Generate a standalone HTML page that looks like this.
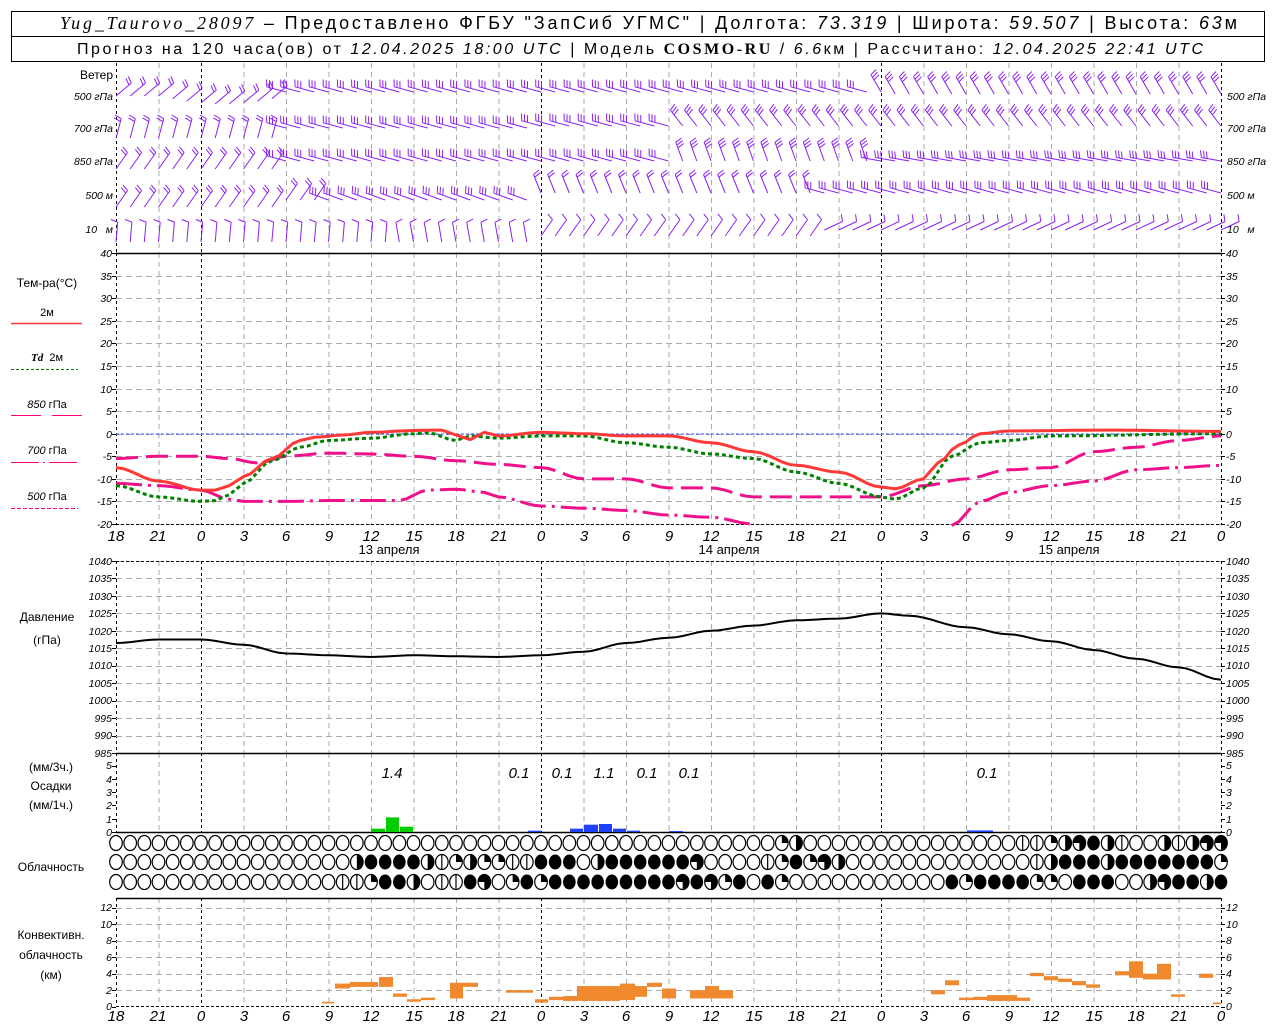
<!DOCTYPE html>
<html><head><meta charset="utf-8">
<style>
html,body{margin:0;padding:0;background:#fff;width:1280px;height:1024px;overflow:hidden}
svg{display:block;font-family:"Liberation Sans",sans-serif}
.ax{font-size:10.5px;font-style:italic}
.lb{font-size:12px}
.xl{font-size:15px;font-style:italic}
</style></head><body>
<svg id="s" width="1280" height="1024" viewBox="0 0 1280 1024" xmlns="http://www.w3.org/2000/svg">
<rect x="11.5" y="11.5" width="1253" height="50" fill="none" stroke="#000"/>
<line x1="11" y1="36.5" x2="1264" y2="36.5" stroke="#000"/>
<text x="60" y="29" font-size="18" textLength="1177" lengthAdjust="spacing"><tspan font-style="italic" font-family="Liberation Serif">Yug_Taurovo_28097</tspan> – Предоставлено ФГБУ "ЗапСиб УГМС" | Долгота: <tspan font-style="italic">73.319</tspan> | Широта: <tspan font-style="italic">59.507</tspan> | Высота: <tspan font-style="italic">63</tspan>м</text>
<text x="77" y="54" font-size="16" textLength="1126" lengthAdjust="spacing">Прогноз на 120 часа(ов) от <tspan font-style="italic">12.04.2025 18:00 UTC</tspan> | Модель <tspan font-weight="bold" font-family="Liberation Serif">COSMO-RU</tspan> / <tspan font-style="italic">6.6</tspan>км | Рассчитано: <tspan font-style="italic">12.04.2025 22:41 UTC</tspan></text>

<g id="grid"></g>
<g id="data"></g>

<g class="lb" text-anchor="end">
<text x="113" y="79">Ветер</text>
</g>
<g class="ax" text-anchor="end" font-size="11">
<text x="113" y="100">500 гПа</text><text x="113" y="132">700 гПа</text><text x="113" y="165">850 гПа</text><text x="113" y="199">500 м</text><text x="113" y="233">10 &#160; м</text>
</g>
<g class="ax" font-size="11">
<text x="1227" y="100">500 гПа</text><text x="1227" y="132">700 гПа</text><text x="1227" y="165">850 гПа</text><text x="1227" y="199">500 м</text><text x="1227" y="233">10 &#160; м</text>
</g>
<g class="lb" text-anchor="middle">
<text x="47" y="287">Тем-ра(°С)</text>
<text x="47" y="316" font-size="11">2м</text>
<text x="47" y="361" font-size="11"><tspan font-style="italic" font-weight="bold" font-family="Liberation Serif">Td</tspan> &#160;2м</text>
<text x="47" y="408" font-size="11"><tspan font-style="italic">850</tspan> гПа</text>
<text x="47" y="454" font-size="11"><tspan font-style="italic">700</tspan> гПа</text>
<text x="47" y="500" font-size="11"><tspan font-style="italic">500</tspan> гПа</text>
<text x="47" y="621">Давление</text>
<text x="47" y="644">(гПа)</text>
<text x="51" y="771">(мм/3ч.)</text>
<text x="51" y="790">Осадки</text>
<text x="51" y="809">(мм/1ч.)</text>
<text x="51" y="871">Облачность</text>
<text x="51" y="939">Конвективн.</text>
<text x="51" y="959">облачность</text>
<text x="51" y="979">(км)</text>
</g>
<line x1="11" y1="323.5" x2="82" y2="323.5" stroke="#ff3838" stroke-width="1.5"/>
<line x1="11" y1="369.5" x2="78" y2="369.5" stroke="#008000" stroke-dasharray="3 2"/>
<line x1="11" y1="415.5" x2="82" y2="415.5" stroke="#ff0080" stroke-dasharray="30 11"/>
<line x1="11" y1="462.5" x2="78" y2="462.5" stroke="#ff0080" stroke-dasharray="28 4 2 4"/>
<line x1="11" y1="508.5" x2="78" y2="508.5" stroke="#ff0080" stroke-dasharray="4 2"/>

<g class="ax" text-anchor="end">
<text x="112" y="257">40</text><text x="112" y="280">35</text><text x="112" y="302">30</text><text x="112" y="325">25</text><text x="112" y="347">20</text><text x="112" y="370">15</text><text x="112" y="393">10</text><text x="112" y="415">5</text><text x="112" y="438">0</text><text x="112" y="460">-5</text><text x="112" y="483">-10</text><text x="112" y="505">-15</text><text x="112" y="528">-20</text>
</g>
<g class="ax">
<text x="1226" y="257">40</text><text x="1226" y="280">35</text><text x="1226" y="302">30</text><text x="1226" y="325">25</text><text x="1226" y="347">20</text><text x="1226" y="370">15</text><text x="1226" y="393">10</text><text x="1226" y="415">5</text><text x="1226" y="438">0</text><text x="1226" y="460">-5</text><text x="1226" y="483">-10</text><text x="1226" y="505">-15</text><text x="1226" y="528">-20</text>
</g>
<g class="xl" text-anchor="middle">
<text y="541"><tspan x="116">18</tspan><tspan x="158">21</tspan><tspan x="201">0</tspan><tspan x="244">3</tspan><tspan x="286">6</tspan><tspan x="329">9</tspan><tspan x="371">12</tspan><tspan x="414">15</tspan><tspan x="456">18</tspan><tspan x="499">21</tspan><tspan x="541">0</tspan><tspan x="584">3</tspan><tspan x="626">6</tspan><tspan x="669">9</tspan><tspan x="711">12</tspan><tspan x="754">15</tspan><tspan x="796">18</tspan><tspan x="839">21</tspan><tspan x="881">0</tspan><tspan x="924">3</tspan><tspan x="966">6</tspan><tspan x="1009">9</tspan><tspan x="1051">12</tspan><tspan x="1094">15</tspan><tspan x="1136">18</tspan><tspan x="1179">21</tspan><tspan x="1221">0</tspan></text>
<text y="1021"><tspan x="116">18</tspan><tspan x="158">21</tspan><tspan x="201">0</tspan><tspan x="244">3</tspan><tspan x="286">6</tspan><tspan x="329">9</tspan><tspan x="371">12</tspan><tspan x="414">15</tspan><tspan x="456">18</tspan><tspan x="499">21</tspan><tspan x="541">0</tspan><tspan x="584">3</tspan><tspan x="626">6</tspan><tspan x="669">9</tspan><tspan x="711">12</tspan><tspan x="754">15</tspan><tspan x="796">18</tspan><tspan x="839">21</tspan><tspan x="881">0</tspan><tspan x="924">3</tspan><tspan x="966">6</tspan><tspan x="1009">9</tspan><tspan x="1051">12</tspan><tspan x="1094">15</tspan><tspan x="1136">18</tspan><tspan x="1179">21</tspan><tspan x="1221">0</tspan></text>
</g>
<g font-size="13" text-anchor="middle">
<text x="389" y="554">13 апреля</text><text x="729" y="554">14 апреля</text><text x="1069" y="554">15 апреля</text>
</g>
<g class="ax" text-anchor="end" font-size="9">
<text x="112" y="565">1040</text><text x="112" y="582">1035</text><text x="112" y="600">1030</text><text x="112" y="617">1025</text><text x="112" y="635">1020</text><text x="112" y="652">1015</text><text x="112" y="669">1010</text><text x="112" y="687">1005</text><text x="112" y="704">1000</text><text x="112" y="722">995</text><text x="112" y="739">990</text><text x="112" y="757">985</text>
</g>
<g class="ax" font-size="9">
<text x="1226" y="565">1040</text><text x="1226" y="582">1035</text><text x="1226" y="600">1030</text><text x="1226" y="617">1025</text><text x="1226" y="635">1020</text><text x="1226" y="652">1015</text><text x="1226" y="669">1010</text><text x="1226" y="687">1005</text><text x="1226" y="704">1000</text><text x="1226" y="722">995</text><text x="1226" y="739">990</text><text x="1226" y="757">985</text>
</g>
<g class="ax" text-anchor="end" font-size="9">
<text x="112" y="769">5</text><text x="112" y="783">4</text><text x="112" y="796">3</text><text x="112" y="809">2</text><text x="112" y="823">1</text><text x="112" y="836">0</text>
</g>
<g class="ax" font-size="9">
<text x="1226" y="769">5</text><text x="1226" y="783">4</text><text x="1226" y="796">3</text><text x="1226" y="809">2</text><text x="1226" y="823">1</text><text x="1226" y="836">0</text>
</g>
<g class="xl" font-size="13" text-anchor="middle">
<text x="392" y="778">1.4</text><text x="519" y="778">0.1</text><text x="562" y="778">0.1</text><text x="604" y="778">1.1</text><text x="647" y="778">0.1</text><text x="689" y="778">0.1</text><text x="987" y="778">0.1</text>
</g>
<g class="ax" text-anchor="end" font-size="10">
<text x="112" y="1010">0</text><text x="112" y="994">2</text><text x="112" y="977">4</text><text x="112" y="961">6</text><text x="112" y="944">8</text><text x="112" y="928">10</text><text x="112" y="911">12</text>
</g>
<g class="ax" font-size="10">
<text x="1226" y="1010">0</text><text x="1226" y="994">2</text><text x="1226" y="977">4</text><text x="1226" y="961">6</text><text x="1226" y="944">8</text><text x="1226" y="928">10</text><text x="1226" y="911">12</text>
</g>
</svg>
<script>
(function(){
var NS="http://www.w3.org/2000/svg";
var G=document.getElementById("grid"),D=document.getElementById("data");
function el(p,t,a){var e=document.createElementNS(NS,t);for(var k in a)e.setAttribute(k,a[k]);p.appendChild(e);return e;}
function X(h){return 116+h*14.1667;}
function L(p,x1,y1,x2,y2,c,w,da){var a={x1:x1,y1:y1,x2:x2,y2:y2,stroke:c,"stroke-width":w||1};if(da)a["stroke-dasharray"]=da;el(p,"line",a);}
var panels=[[63,253],[253,524],[561,753],[753,832],[898,1006]];
panels.forEach(function(p){
 for(var k=0;k<=26;k++){var x=116.5+42.5*k;var blk=(k==0||k==2||k==10||k==18||k==26);
  L(G,x,p[0],x,p[1],blk?"#000":"#aaa",1,blk?"3 3":"5 4");}
});
for(var t=-20;t<=40;t+=5){var y=253+(40-t)*4.517;y=Math.round(y)+.5;L(G,116,y,1221,y,"#aaa",1,"6 4");L(G,112,y,116,y,"#000",1);L(G,1221,y,1225,y,"#000",1);}
for(var p=985;p<=1040;p+=5){var y=Math.round(561+(1040-p)*3.49)+.5;L(G,116,y,1221,y,"#aaa",1,"6 4");L(G,112,y,116,y,"#000",1);L(G,1221,y,1225,y,"#000",1);}
for(var m=0;m<=5;m++){var y=Math.round(832-m*13.3)+.5;L(G,112,y,116,y,"#000",1);L(G,1221,y,1225,y,"#000",1);}
for(var k=0;k<=12;k+=2){var y=Math.round(1006.7-k*8.25)+.5;if(k>0)L(G,116,y,1221,y,"#aaa",1,"6 4");L(G,112,y,116,y,"#000",1);L(G,1221,y,1225,y,"#000",1);}
L(G,116,253.5,1221,253.5,"#000",1.5);
L(G,116,524.5,1221,524.5,"#000",1,"3 2");
L(G,116,561.5,1221,561.5,"#000",1,"3 2");
L(G,116,753.5,1221,753.5,"#000",1.5);
L(G,116,832.5,1221,832.5,"#000",1.5);
L(G,116,898.5,1221,898.5,"#000",1.5);
L(G,116,1006.5,1221,1006.5,"#000",1,"3 2");
L(G,116,434,1221,434,"#3050ff",1,"3 2");
function path(pts,f){var s="";pts.forEach(function(q,i){s+=(i?"L":"M")+X(q[0]).toFixed(1)+" "+f(q[1]).toFixed(1);});return s;}
function smooth(pts){var out=[];for(var i=0;i<pts.length-1;i++){var a=pts[i],b=pts[i+1];for(var h=a[0];h<b[0];h+=0.5){var u=(h-a[0])/(b[0]-a[0]);u=u*u*(3-2*u);out.push([h,a[1]+(b[1]-a[1])*u]);}}out.push(pts[pts.length-1]);return out;}
function TY(t){return 253+(40-t)*4.517;}
var t700a=[[0,-11],[3,-11.5],[6,-12.5],[8,-14.5],[9,-15],[12,-15],[15,-14.8],[20,-14.8],[22,-12.5],[24,-12.3],[26,-13],[27,-14],[30,-16],[33,-16.5],[36,-17],[39,-18],[42,-18.5],[45,-20]];
var t700b=[[59,-20.3],[61,-15],[63,-13],[66,-11.5],[69,-10.5],[72,-8],[75,-7.5],[78,-7]];
var t850=[[0,-5.5],[3,-5],[6,-5],[8,-5.5],[10,-6.5],[12,-5],[15,-4.3],[18,-4.5],[21,-5],[24,-6],[27,-6.8],[30,-7.5],[33,-10],[36,-10],[39,-12],[42,-12],[45,-14],[48,-14],[54,-14],[57,-11.5],[60,-10],[63,-8],[66,-7.5],[69,-4],[72,-3],[75,-1.5],[78,-0.5]];
var td=[[0,-11.5],[3,-14],[6,-15],[7,-14.8],[8,-13.5],[9,-11],[11,-6],[13,-3],[15,-1.5],[18,-1],[21,0],[22,0.2],[24,-1.5],[25,-0.5],[27,-1],[30,-0.5],[33,-0.5],[36,-2],[39,-3],[42,-4.5],[45,-5.5],[48,-8.5],[51,-11],[54,-14],[55,-14.5],[57,-12],[59,-5],[61,-2],[63,-1.5],[66,-0.5],[78,0]];
var t2=[[0,-7.5],[3,-10.5],[6,-12.5],[7,-12.5],[8,-11.5],[9,-9.5],[11,-5.5],[13,-1.5],[14,-0.8],[16,-0.3],[18,0.3],[21,0.7],[23,0.8],[24,-0.3],[25,-1.3],[26,0.3],[27,-0.5],[30,0.3],[33,0],[36,-0.5],[39,-0.5],[42,-2],[45,-4],[48,-7],[51,-8.5],[54,-11.8],[55,-12.2],[57,-10],[58,-6.5],[59.5,-2.5],[61,0],[63,0.6],[70,0.8],[78,0.5]];
el(D,"path",{d:path(smooth(t700a),TY),fill:"none",stroke:"#f0108a","stroke-width":3,"stroke-dasharray":"26 6 3 6"});
el(D,"path",{d:path(smooth(t700b),TY),fill:"none",stroke:"#f0108a","stroke-width":3,"stroke-dasharray":"26 6 3 6"});
el(D,"path",{d:path(smooth(t850),TY),fill:"none",stroke:"#f0108a","stroke-width":3,"stroke-dasharray":"22 8"});
el(D,"path",{d:path(smooth(td),TY),fill:"none",stroke:"#008000","stroke-width":3,"stroke-dasharray":"4 3"});
el(D,"path",{d:path(smooth(t2),TY),fill:"none",stroke:"#ff3838","stroke-width":3});
var pr=[[0,1016.5],[3,1017.5],[6,1017.5],[9,1016],[12,1013.5],[15,1013],[18,1012.5],[21,1013],[24,1012.7],[27,1012.5],[30,1013],[33,1014],[36,1016.5],[39,1018],[42,1020],[45,1021.5],[48,1023],[51,1023.5],[54,1025],[56,1024.3],[60,1021],[63,1019],[66,1017],[69,1014.5],[72,1012],[75,1009.5],[78,1006]];
el(D,"path",{d:path(smooth(pr),function(p){return 561+(1040-p)*3.49;}),fill:"none",stroke:"#000","stroke-width":2});
function bar(x1,x2,v,c){var y=832-v*13.3;el(D,"rect",{x:x1,y:y,width:x2-x1,height:832-y,fill:c});}
bar(371,385,0.25,"#00cc00");bar(386,399,1.1,"#00cc00");bar(400,413,0.4,"#00cc00");
bar(528,541,0.1,"#2040ff");bar(570,583,0.25,"#2040ff");bar(584,598,0.55,"#2040ff");bar(599,612,0.6,"#2040ff");bar(613,626,0.25,"#2040ff");bar(627,640,0.1,"#2040ff");bar(669,683,0.07,"#2040ff");bar(967,993,0.12,"#2040ff");
function cb(x1,x2,a,b){var y1=1006.7-b*8.25,y2=1006.7-a*8.25;el(D,"rect",{x:x1,y:y1,width:x2-x1,height:y2-y1,fill:"#f0882e"});}
[[322,334,0.4,0.6],[335,350,2.2,2.8],[350,365,2.4,3],[365,378,2.4,3],[379,393,2.4,3.6],[393,407,1.2,1.6],[407,421,0.6,0.9],[421,435,0.8,1.1],[450,463,1.0,2.9],[463,478,2.4,2.9],[506,533,1.7,2.0],[535,548,0.5,0.9],[549,563,0.8,1.2],[563,577,0.7,1.3],[577,605,0.7,2.5],[605,620,0.7,2.5],[620,635,0.8,2.8],[635,647,1.2,2.5],[647,662,2.4,2.9],[662,676,1.0,2.2],[690,705,1.0,2.0],[705,719,1.0,2.5],[719,733,1.0,2.0],[931,945,1.5,2.0],[945,959,2.6,3.2],[959,973,0.8,1.1],[973,987,0.8,1.2],[987,1017,0.7,1.4],[1017,1030,0.7,1.1],[1030,1044,3.7,4.1],[1044,1058,3.2,3.7],[1058,1072,3.0,3.4],[1072,1086,2.6,3.1],[1086,1100,2.3,2.7],[1115,1129,3.8,4.3],[1129,1143,3.5,5.5],[1143,1157,3.3,4.0],[1157,1171,3.3,5.2],[1171,1185,1.2,1.5],[1199,1213,3.5,4.0],[1213,1221,0.3,0.5]].forEach(function(r){cb(r[0],r[1],r[2],r[3]);});
var rows=[
"oooooooooooooooooooooooooooooooooooooooooooooooqhooooooooooooooollqhtfhloohlhtth",
"ooooooooooooooooohffffhlqhqqllfffohfffffftoooolqfqthooooooooooooolhfffhfffffffqfff",
"oooooooooooooooollqffhollftoqfqffffffffftftqfofqooooooooooofqffffqqofffoohtffhff"];
var ys=[843,862,882];
rows.forEach(function(r,ri){
 for(var k=0;k<79;k++){var c=r.charAt(k)||"o";var cx=X(k),cy=ys[ri],rx=6.3,ry=7.5;
  if(c=="f"){el(D,"ellipse",{cx:cx,cy:cy,rx:rx,ry:ry,fill:"#000"});continue;}
  el(D,"ellipse",{cx:cx,cy:cy,rx:rx,ry:ry,fill:"#fff",stroke:"#000","stroke-width":1.2});
  if(c=="l")L(D,cx,cy-ry,cx,cy+ry,"#000",1.2);
  if(c=="q")el(D,"path",{d:"M"+cx+" "+cy+"V"+(cy-ry)+"A"+rx+" "+ry+" 0 0 1 "+(cx+rx)+" "+cy+"Z",fill:"#000"});
  if(c=="h")el(D,"path",{d:"M"+cx+" "+(cy-ry)+"A"+rx+" "+ry+" 0 0 1 "+cx+" "+(cy+ry)+"Z",fill:"#000"});
  if(c=="t")el(D,"path",{d:"M"+cx+" "+cy+"H"+(cx-rx)+"A"+rx+" "+ry+" 0 1 1 "+cx+" "+(cy+ry)+"Z",fill:"#000"});
 }
});
var PC="#8c1ff0";
function seg(h,defs){for(var i=0;i<defs.length;i++)if(h<defs[i][0])return defs[i];return defs[defs.length-1];}
var W=[
 {y:96,off:function(h){return h<3?0:h<12?Math.sin((h-3)/9*Math.PI)*8:(h>54?-2:-4);},d:[[12,-40,2],[54,195,3],[79,-120,3]]},
 {y:128,off:function(h){return h<12?10:h<30?0:-2;},d:[[12,-75,2],[40,195,3],[79,-128,3]]},
 {y:161,off:function(h){return h<12?8:0;},d:[[12,-55,2],[40,195,3],[54,-110,3],[79,190,3]]},
 {y:195,off:function(h){return h<12?12:h<30?5:-2;},d:[[15,-55,2],[30,200,3],[50,-112,2],[79,195,3]]},
 {y:230,off:function(h){return h<30?12:h<50?6:0;},d:[[20,-85,1],[30,-100,1],[50,-55,1],[79,-25,1]]}
];
W.forEach(function(r){
 for(var h=0;h<=78;h++){var s=seg(h,r.d);var a=s[1]*Math.PI/180,n=s[2];
  var bx=X(h),by=r.y+r.off(h);var len=20;
  var ex=bx+Math.cos(a)*len,ey=by+Math.sin(a)*len;
  var ux=Math.cos(a),uy=Math.sin(a);var px=-uy,py=ux;if(py>0||(Math.abs(py)<0.2&&px<0)){px=-px;py=-py;}
  var d="M"+bx.toFixed(1)+" "+by.toFixed(1)+"L"+ex.toFixed(1)+" "+ey.toFixed(1);
  for(var j=0;j<n;j++){var fx=ex-ux*j*3,fy=ey-uy*j*3;d+="M"+fx.toFixed(1)+" "+fy.toFixed(1)+"l"+(px*7+ux*2).toFixed(1)+" "+(py*7+uy*2).toFixed(1);}
  el(D,"path",{d:d,fill:"none",stroke:PC,"stroke-width":1});
 }
});
})();
</script>
</body></html>
